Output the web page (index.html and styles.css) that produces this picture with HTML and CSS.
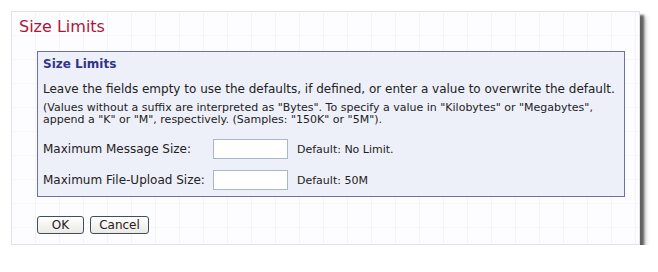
FILE: index.html
```html
<!DOCTYPE html>
<html>
<head>
<meta charset="utf-8">
<link rel="stylesheet" href="styles.css">
</head>
<body>
<div class="card">
  <h1 class="title">Size Limits</h1>
  <div class="box">
    <h2 class="box-title">Size Limits</h2>
    <p class="intro">Leave the fields empty to use the defaults, if defined, or enter a value to overwrite the default.</p>
    <p class="note">(Values without a suffix are interpreted as "Bytes". To specify a value in "Kilobytes" or "Megabytes",<br>append a "K" or "M", respectively. (Samples: "150K" or "5M").</p>
    <div class="row">
      <label class="label">Maximum Message Size:</label>
      <input class="field" type="text">
      <span class="hint">Default: No Limit.</span>
    </div>
    <div class="row">
      <label class="label">Maximum File-Upload Size:</label>
      <input class="field" type="text">
      <span class="hint">Default: 50M</span>
    </div>
  </div>
  <div class="actions">
    <button class="btn btn-ok">OK</button>
    <button class="btn btn-cancel">Cancel</button>
  </div>
</div>
</body>
</html>
```
FILE: styles.css
```css
html, body {
  margin: 0;
  padding: 0;
  background: #ffffff;
}
body {
  padding: 11px 0 0 11px;
  font-family: "DejaVu Sans", Verdana, sans-serif;
  color: #222;
}
.card {
  width: 629px;
  height: 234px;
  box-sizing: border-box;
  border: 1px solid #e2e2e8;
  background-color: #fdfcff;
  background-image:
    repeating-linear-gradient(90deg, transparent 0, transparent 23px, #f4f4f8 23px, #f4f4f8 24px),
    repeating-linear-gradient(180deg, transparent 0, transparent 23px, #f7f7fa 23px, #f7f7fa 24px);
  box-shadow: 4px 4px 2px rgba(70,70,70,0.8), 6px 6px 4px rgba(120,120,120,0.4);
  padding: 0 0 0 25px;
}
.title {
  margin: 3px 0 0 -18px;
  font-family: "DejaVu Sans", Verdana, sans-serif;
  font-weight: normal;
  font-size: 16px;
  line-height: 24px;
  color: #b01538;
}
.box {
  margin-top: 12px;
  width: 588px;
  height: 146px;
  box-sizing: border-box;
  border: 1px solid #6f6fa8;
  background: #eef0f9;
  padding: 0 0 0 5px;
}
.box-title {
  margin: 4px 0 0 0;
  font-size: 12px;
  font-weight: bold;
  line-height: 16px;
  color: #333388;
}
.intro {
  margin: 9px 0 0 0;
  font-size: 12px;
  line-height: 16px;
  color: #222;
  white-space: nowrap;
}
.note {
  margin: 5px 0 0 0;
  font-size: 11px;
  line-height: 12px;
  color: #222;
  white-space: nowrap;
}
.row {
  display: flex;
  align-items: center;
  margin-top: 13px;
}
.row + .row {
  margin-top: 11px;
}
.label {
  width: 170px;
  font-size: 12px;
  color: #222;
}
.field {
  width: 75px;
  height: 20px;
  box-sizing: border-box;
  border: 1px solid #a8b8c8;
  background: #fff;
  margin: 0;
  padding: 0;
}
.hint {
  margin-left: 9px;
  font-size: 11px;
  color: #222;
}
.actions {
  display: flex;
  gap: 6px;
  margin-top: 19px;
}
.btn {
  height: 18px;
  box-sizing: border-box;
  border: 1px solid #3d4f66;
  border-radius: 3px;
  background: linear-gradient(#ffffff, #ece9e2);
  font-family: "DejaVu Sans", Verdana, sans-serif;
  font-size: 12px;
  color: #222;
  padding: 0;
  line-height: 16px;
}
.btn-ok { width: 47px; }
.btn-cancel { width: 59px; }
```
